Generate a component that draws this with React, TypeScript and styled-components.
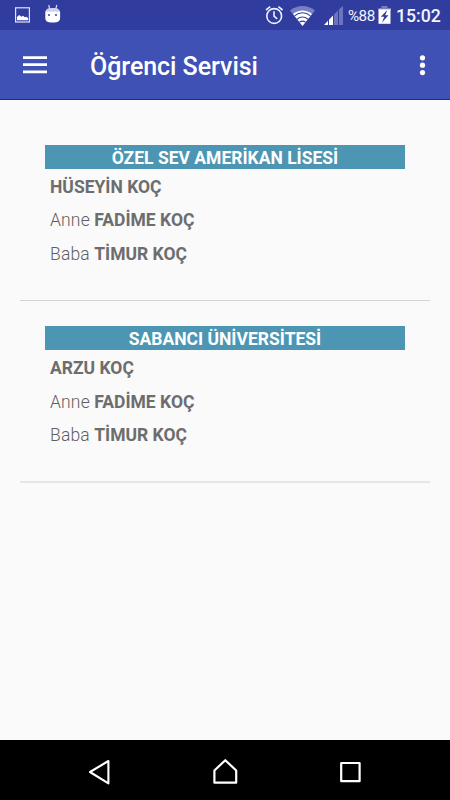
import React from 'react';
import styled, { createGlobalStyle } from 'styled-components';

const GlobalStyle = createGlobalStyle`
  * { box-sizing: border-box; }
  body {
    margin: 0;
    background: #fafafa;
    font-family: Roboto, "Noto Sans", sans-serif;
  }
`;

const Screen = styled.div`
  display: flex;
  flex-direction: column;
  width: 450px;
  height: 800px;
  overflow: hidden;
  background: #fafafa;
`;

const StatusBar = styled.div`
  display: flex;
  align-items: center;
  justify-content: space-between;
  height: 30px;
  padding: 0 10px 0 14px;
  background: #303d9f;
  color: #f3f5ff;
`;

const Cluster = styled.div`
  display: flex;
  align-items: center;
  height: 30px;
`;

const Icon = styled.svg<{ $gap?: number }>`
  display: block;
  flex: none;
  margin-right: ${({ $gap = 0 }) => $gap}px;
`;

const Percent = styled.span`
  width: 28px;
  margin-right: 2px;
  font-size: 15.2px;
  line-height: 30px;
  white-space: nowrap;
  letter-spacing: -0.5px;
  padding-top: 1px;
`;

const Clock = styled.span`
  width: 44px;
  font-size: 17.7px;
  font-weight: 500;
  line-height: 30px;
  padding-top: 2px;
  white-space: nowrap;
`;

const AppBar = styled.header`
  display: flex;
  align-items: center;
  height: 70px;
  padding: 0 22px 0 23px;
  background: #3f51b5;
  border-bottom: 1px solid #173083;
  color: #fff;
`;

const IconButton = styled.button`
  display: flex;
  padding: 0;
  border: 0;
  background: none;
  color: inherit;
`;

const Title = styled.h1`
  flex: 1;
  margin: 0 0 0 43px;
  padding-top: 4px;
  font-size: 25px;
  font-weight: 500;
  line-height: 30px;
  letter-spacing: -0.04px;
`;

const Content = styled.main`
  flex: 1;
  padding: 20px 20px 0;
`;

const Card = styled.section`
  height: 181.3px;
  padding: 25px 25px 0;
  border-bottom: 1px solid #d3d3d3;

  &:last-child { border-bottom: 2px solid #e6e6e6; }
`;

const School = styled.h2`
  height: 23.6px;
  margin: 0;
  background: #4c96b3;
  color: #fff;
  font-size: 17.5px;
  font-weight: 700;
  line-height: 26px;
  text-align: center;
`;

const Person = styled.p`
  margin: 0;
  height: 33.75px;
  padding-left: 5px;
  color: #5f5f5f;
  font-size: 17.5px;
  font-weight: 300;
  line-height: 36px;
`;

const Role = styled.span`
  letter-spacing: 0.15px;
`;

const Name = styled.strong`
  color: #6d6d6d;
  font-weight: 700;
`;

const NavBar = styled.nav`
  display: grid;
  grid-template-columns: repeat(3, 125px);
  justify-content: center;
  align-items: center;
  justify-items: center;
  height: 60px;
  background: #000;
  color: #fff;
`;

const schools = [
  { school: 'ÖZEL SEV AMERİKAN LİSESİ', student: 'HÜSEYİN KOÇ' },
  { school: 'SABANCI ÜNİVERSİTESİ', student: 'ARZU KOÇ' },
];

const parents = [
  { role: 'Anne', name: 'FADİME KOÇ' },
  { role: 'Baba', name: 'TİMUR KOÇ' },
];

const PictureIcon = () => (
  <Icon $gap={14} width="17" height="30" viewBox="0 0 17 30">
    <rect x="1.6" y="7.8" width="13.8" height="14.2" fill="none" stroke="#dfe3fb" strokeWidth="1.2" />
    <path d="M3 20.2V17l2.2-2 2.2 1.7 1.5-.9 2 1.5 1.2-.6 2 1.3v2.2z" fill="#fff" />
  </Icon>
);

const AndroidIcon = () => (
  <Icon width="16" height="30" viewBox="0 0 16 30">
    <path d="M3.7 5l1 4M11.8 5l-1 4" stroke="#d5d9f3" strokeWidth="1.2" />
    <path d="M.7 11.5C1 8.7 3 8 7.7 8s6.7.7 7 3.5z" fill="#ccd0ee" />
    <path d="M.3 11.3h14.8v6.5c0 3.5-2 4.7-7.4 4.7s-7.4-1.2-7.4-4.7z" fill="#fff" />
    <path d="M3 14h2v2H3zM10 14h2v2h-2z" fill="#6970b6" />
  </Icon>
);

const AlarmIcon = () => (
  <Icon $gap={6} width="19" height="30" viewBox="0 0 19 30" fill="none" stroke="#f0f3ff" strokeWidth="1.6">
    <circle cx="9.2" cy="16" r="7.4" />
    <path d="M1 10l4.2-3.3M17.6 10l-4.2-3.3M9 11.3v4.9l3.2 2.7" />
  </Icon>
);

const WifiIcon = () => (
  <Icon $gap={9} width="25" height="30" viewBox="0 0 25 30">
    <path d="M0 10.5C7 4.5 18 4.5 25 10.5L12.5 26z" fill="#7780c4" />
    <path d="M3 14C8.2 9.2 16.8 9.2 22 14L12.5 26z" fill="#fff" />
    <path d="M4.6 15.9c4.7-4.1 11.1-4.1 15.8 0M7 19.2c3.4-2.7 7.6-2.7 11 0M9.4 22.2c2-1.4 4.2-1.4 6.2 0" fill="none" stroke="#303d9f" strokeWidth="1.1" />
  </Icon>
);

const SignalIcon = () => (
  <Icon $gap={4} width="20" height="30" viewBox="0 0 20 30">
    <path d="M0 25l4-4.2V25zM5 19.7l4-4.2V25H5z" fill="#fff" />
    <path d="M10 14.5l4-4.1V25h-4zM15 9.3l4-3.4V25h-4z" fill="#6b75bd" />
  </Icon>
);

const BatteryIcon = () => (
  <Icon $gap={5} width="13" height="30" viewBox="0 0 13 30">
    <path d="M3.5 6h6v2H13v3H.5V8h3z" fill="#7680c2" />
    <path d="M.5 9.3h12v14.5H.5z" fill="#fff" />
    <path d="M9.3 10L2.8 16.8h3.4L4 22.5l6.5-7.2H7.2z" fill="#303d9f" />
  </Icon>
);

export default function App() {
  return (
    <Screen>
      <GlobalStyle />
      <StatusBar>
        <Cluster>
          <PictureIcon />
          <AndroidIcon />
        </Cluster>
        <Cluster>
          <AlarmIcon />
          <WifiIcon />
          <SignalIcon />
          <Percent>%88</Percent>
          <BatteryIcon />
          <Clock>15:02</Clock>
        </Cluster>
      </StatusBar>

      <AppBar>
        <IconButton aria-label="Menü">
          <Icon width="24" height="20" viewBox="0 0 24 20" fill="currentColor">
            <path d="M0 1.2h24v2.8H0zM0 8.3h24v2.8H0zM0 15.4h24v2.8H0z" />
          </Icon>
        </IconButton>
        <Title>Öğrenci Servisi</Title>
        <IconButton aria-label="Diğer seçenekler">
          <Icon width="11" height="24" viewBox="0 0 11 24" fill="currentColor">
            <circle cx="5.5" cy="4.8" r="2.6" />
            <circle cx="5.5" cy="12.2" r="2.6" />
            <circle cx="5.5" cy="19.6" r="2.6" />
          </Icon>
        </IconButton>
      </AppBar>

      <Content>
        {schools.map(({ school, student }) => (
          <Card key={school}>
            <School>{school}</School>
            <Person><Name>{student}</Name></Person>
            {parents.map(({ role, name }) => (
              <Person key={role}><Role>{role} </Role><Name>{name}</Name></Person>
            ))}
          </Card>
        ))}
      </Content>

      <NavBar>
        <IconButton aria-label="Geri">
          <Icon width="26" height="30" viewBox="0 0 26 30" fill="none" stroke="currentColor" strokeWidth="2.1" strokeLinejoin="round">
            <path d="M21.4 6v22.4L3 17z" />
          </Icon>
        </IconButton>
        <IconButton aria-label="Ana ekran">
          <Icon width="28" height="30" viewBox="0 0 28 30" fill="none" stroke="currentColor" strokeWidth="2.2" strokeLinejoin="round">
            <path d="M3.4 27.7V15.5L14.3 5.2l10.9 10.3v12.2z" />
          </Icon>
        </IconButton>
        <IconButton aria-label="Son uygulamalar">
          <Icon width="24" height="30" viewBox="0 0 24 30" fill="none" stroke="currentColor" strokeWidth="2.2" strokeLinejoin="round">
            <path d="M3.2 8h18.4v18.2H3.2z" />
          </Icon>
        </IconButton>
      </NavBar>
    </Screen>
  );
}
